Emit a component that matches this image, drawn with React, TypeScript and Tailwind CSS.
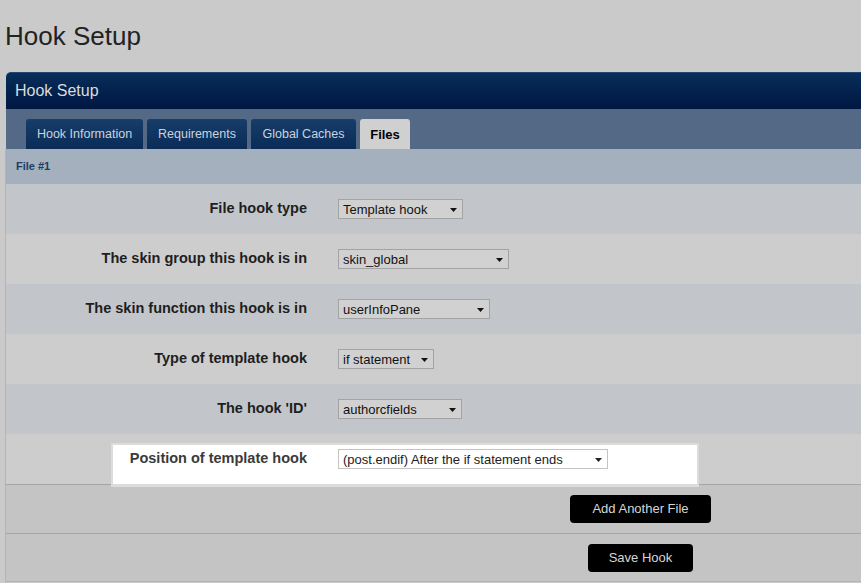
import React from "react";

type Row = { label: string; value: string; w: number; bg: string; hl?: boolean };

const rows: Row[] = [
  { label: "File hook type", value: "Template hook", w: 125, bg: "bg-[#c2c6ca]" },
  { label: "The skin group this hook is in", value: "skin_global", w: 171, bg: "bg-[#cdcdcd]" },
  { label: "The skin function this hook is in", value: "userInfoPane", w: 152, bg: "bg-[#c2c6ca]" },
  { label: "Type of template hook", value: "if statement", w: 96, bg: "bg-[#cdcdcd]" },
  { label: "The hook 'ID'", value: "authorcfields", w: 124, bg: "bg-[#c2c6ca]" },
  { label: "Position of template hook", value: "(post.endif) After the if statement ends", w: 270, bg: "bg-[#cdcdcd]", hl: true },
];

function Select({ value, w, hl }: { value: string; w: number; hl?: boolean }) {
  return (
    <div
      className={`relative z-10 ml-[31px] flex h-[20px] items-center border pl-[4px] text-[13px] leading-none ${
        hl ? "border-[#c4c4c4] bg-white text-[#222]" : "border-[#a3a3a3] bg-[#d1d1d1] text-[#111]"
      }`}
      style={{ width: w }}
    >
      <span className="whitespace-nowrap">{value}</span>
      <svg className="absolute right-[5px] top-[8px]" width="7" height="4" viewBox="0 0 7 4">
        <path d="M0 0H7L3.5 4Z" fill={hl ? "#222" : "#111"} />
      </svg>
    </div>
  );
}

const tabs = [
  { name: "Hook Information", w: 117 },
  { name: "Requirements", w: 100 },
  { name: "Global Caches", w: 105 },
];

export default function App() {
  return (
    <div className="h-[583px] w-[861px] overflow-hidden bg-[#cacaca] [font-family:'Liberation_Sans',Arial,sans-serif]">
      <h1 className="mb-[21px] mt-[21px] h-[30px] pl-[5px] text-[26px] font-normal leading-[30px] text-[#222]">
        Hook Setup
      </h1>
      <div className="ml-[5px] w-[1270px]">
        <div className="ml-[1px] flex h-[37px] items-center rounded-tl-[5px] border-t border-[#1f466f] bg-gradient-to-b from-[#0a2d59] to-[#001742] pl-[9px] text-[16px] text-[#dcdcdc]">
          Hook Setup
        </div>
        <div className="ml-[1px] flex h-[40px] items-end gap-[4px] bg-[#546985] pl-[20px]">
          {tabs.map((t) => (
            <div
              key={t.name}
              className="flex h-[30px] items-center justify-center rounded-t-[3px] bg-gradient-to-b from-[#173d69] to-[#0a2c57] pt-[1px] text-[12.5px] text-[#c9d3df]"
              style={{ width: t.w }}
            >
              {t.name}
            </div>
          ))}
          <div className="flex h-[30px] w-[50px] items-center justify-center rounded-t-[3px] bg-[#d0d0d0] pt-[1px] text-[13px] font-bold text-black">
            Files
          </div>
        </div>
        <div className="border-b border-l border-[#a8b6c5]">
          <div className="flex h-[35px] items-center bg-[#a4b0bd] pl-[10px] text-[11px] font-bold text-[#1c3d66]">
            File #1
          </div>
          {rows.map((r) => (
            <div key={r.label} className={`relative flex h-[50px] items-center ${r.bg}`}>
              {r.hl && (
                <div className="absolute left-[105px] top-[9px] z-10 h-[44px] w-[588px] border-2 border-b-[3px] border-[#dcdcdc] bg-white" />
              )}
              <div
                className={`relative z-10 w-[301px] text-right text-[14.5px] font-bold ${
                  r.hl ? "text-[#3a3a3a]" : "text-[#1e1e1e]"
                }`}
              >
                {r.label}
              </div>
              <Select value={r.value} w={r.w} hl={r.hl} />
            </div>
          ))}
          <div className="flex h-[49px] justify-center border-t border-[#a5a5a5] bg-[#c4c4c4] pt-[10px]">
            <button className="h-[28px] rounded-[4px] bg-black px-[22px] text-[13px] text-[#d6d6d6]">
              Add Another File
            </button>
          </div>
          <div className="flex h-[48px] justify-center border-t border-[#a5a5a5] bg-[#c4c4c4] pt-[10px]">
            <button className="h-[28px] rounded-[4px] bg-black px-[21px] text-[13px] text-[#d6d6d6]">
              Save Hook
            </button>
          </div>
        </div>
      </div>
    </div>
  );
}
